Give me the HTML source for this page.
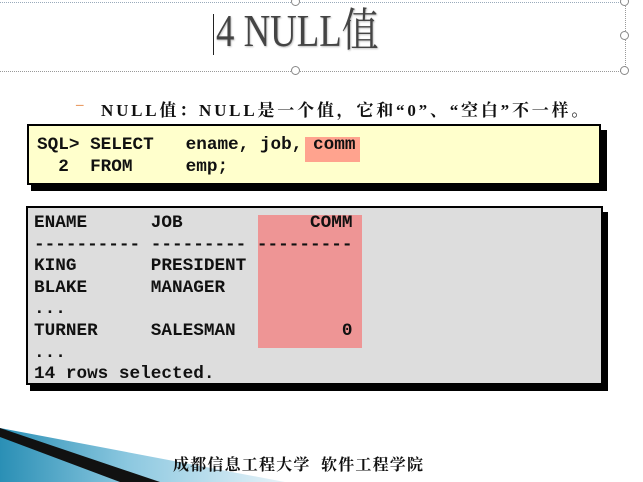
<!DOCTYPE html>
<html><head><meta charset="utf-8"><style>
*{margin:0;padding:0}
body{width:643px;height:482px;position:relative;background:#fff;overflow:hidden;font-family:"Liberation Serif","Noto Serif CJK SC",serif}
.abs{position:absolute}
.h{position:absolute;width:9px;height:9px;border:1.5px solid #888;border-radius:50%;background:#fff;box-sizing:border-box}
.mono{font-family:"Liberation Mono",monospace;font-weight:bold;font-size:17.7px;color:#111;white-space:pre}
</style></head><body>
<div class="abs" style="left:0;top:2px;width:625px;border-top:1px dotted #9ab"></div>
<div class="abs" style="left:0;top:71px;width:625px;border-top:1px dotted #999"></div>
<div class="abs" style="left:625px;top:2px;height:69px;border-left:1px dotted #999"></div>
<div class="h" style="left:291px;top:-3px"></div>
<div class="h" style="left:620px;top:-3px"></div>
<div class="h" style="left:620px;top:31px"></div>
<div class="h" style="left:291px;top:66px"></div>
<div class="h" style="left:620px;top:66px"></div>
<div class="abs" style="left:213px;top:14px;width:1px;height:41px;background:#222"></div>
<div class="abs" style="left:216px;top:8px;font-size:46px;line-height:46px;color:#444;transform:scaleX(0.8);transform-origin:left;white-space:nowrap;text-shadow:1px 1px 2px #bbb">4 NULL值</div>
<div class="abs" style="left:76px;top:97px;color:#e07020;font-size:15px">–</div>
<div class="abs" style="left:101px;top:96px;font-size:17px;font-weight:bold;color:#111;letter-spacing:2.8px;white-space:nowrap">NULL值：NULL是一个值，它和“0”、“空白”不一样。</div>

<div class="abs" style="left:31px;top:130px;width:576px;height:61px;background:#000"></div>
<div class="abs" style="left:27px;top:124px;width:570px;height:57px;background:#ffffcc;border:2px solid #000"></div>
<div class="abs" style="left:305px;top:137px;width:55px;height:25px;background:#ffa38e"></div>
<div class="abs mono" style="left:37px;top:134px;line-height:22px">SQL&gt; SELECT   ename, job, comm
  2  FROM     emp;</div>

<div class="abs" style="left:30px;top:212px;width:578px;height:179px;background:#000"></div>
<div class="abs" style="left:26px;top:206px;width:573px;height:175px;background:#dddddd;border:2px solid #000"></div>
<div class="abs" style="left:258px;top:215px;width:104px;height:133px;background:#ee9595"></div>
<div class="abs mono" style="left:34px;top:213px;line-height:21.6px">ENAME      JOB            COMM
---------- --------- ---------
KING       PRESIDENT
BLAKE      MANAGER
...
TURNER     SALESMAN          0
...
14 rows selected.</div>

<svg class="abs" style="left:0;top:425px" width="300" height="57">
<defs><linearGradient id="g" x1="0" y1="0" x2="1" y2="0"><stop offset="0" stop-color="#2a8fb5"/><stop offset="0.45" stop-color="#8cc8e0"/><stop offset="1" stop-color="#e6f2f8"/></linearGradient></defs>
<polygon points="0,3 285,57 0,57" fill="url(#g)"/>
<polygon points="0,3 160,57 120,57 0,12" fill="#111"/>
</svg>
<div class="abs" style="left:173px;top:452px;font-size:16px;font-weight:bold;color:#111;white-space:pre;letter-spacing:1.2px;font-family:'Noto Serif CJK SC',serif">成都信息工程大学  软件工程学院</div>
</body></html>
